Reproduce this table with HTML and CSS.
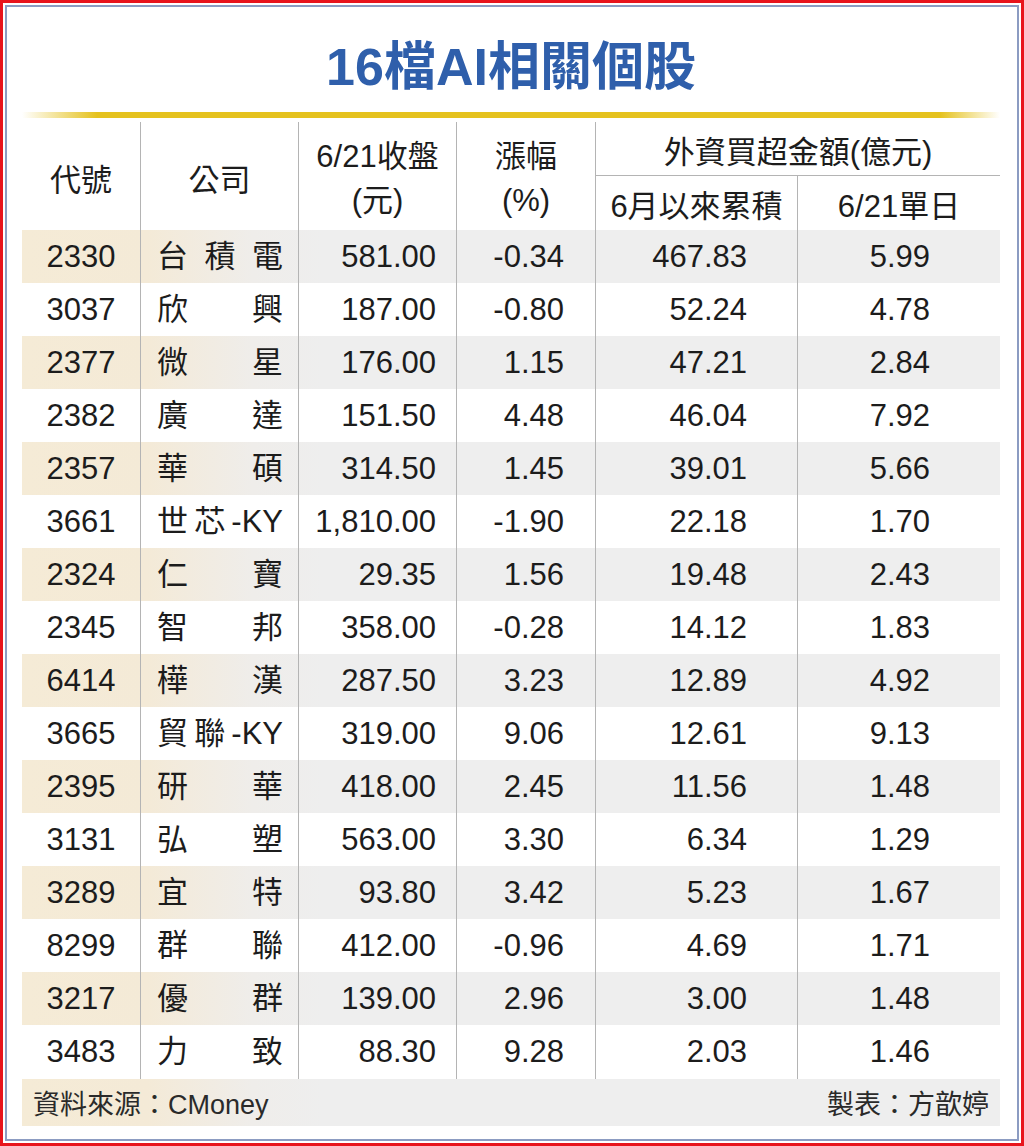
FILE: index.html
```html
<!DOCTYPE html>
<html lang="zh-Hant">
<head>
<meta charset="utf-8">
<title>16檔AI相關個股</title>
<link rel="stylesheet" href="styles.css">
</head>
<body>
<div class="frame">
  <div class="inner">
    <h1 class="title">16檔AI相關個股</h1>
    <div class="rule"></div>
    <div class="table">
      <div class="head">
        <div class="h hc1">代號</div>
        <div class="h hc2">公司</div>
        <div class="h hc3 two"><span>6/21收盤</span><span>(元)</span></div>
        <div class="h hc4 two"><span>漲幅</span><span>(%)</span></div>
        <div class="h group">外資買超金額(億元)</div>
        <div class="h sub5">6月以來累積</div>
        <div class="h sub6">6/21單日</div>
      </div>
      <div class="row alt"><div class="code">2330</div><div class="name">台積電</div><div class="n3">581.00</div><div class="n4">-0.34</div><div class="n5">467.83</div><div class="n6">5.99</div></div>
      <div class="row"><div class="code">3037</div><div class="name">欣興</div><div class="n3">187.00</div><div class="n4">-0.80</div><div class="n5">52.24</div><div class="n6">4.78</div></div>
      <div class="row alt"><div class="code">2377</div><div class="name">微星</div><div class="n3">176.00</div><div class="n4">1.15</div><div class="n5">47.21</div><div class="n6">2.84</div></div>
      <div class="row"><div class="code">2382</div><div class="name">廣達</div><div class="n3">151.50</div><div class="n4">4.48</div><div class="n5">46.04</div><div class="n6">7.92</div></div>
      <div class="row alt"><div class="code">2357</div><div class="name">華碩</div><div class="n3">314.50</div><div class="n4">1.45</div><div class="n5">39.01</div><div class="n6">5.66</div></div>
      <div class="row"><div class="code">3661</div><div class="name">世芯-KY</div><div class="n3">1,810.00</div><div class="n4">-1.90</div><div class="n5">22.18</div><div class="n6">1.70</div></div>
      <div class="row alt"><div class="code">2324</div><div class="name">仁寶</div><div class="n3">29.35</div><div class="n4">1.56</div><div class="n5">19.48</div><div class="n6">2.43</div></div>
      <div class="row"><div class="code">2345</div><div class="name">智邦</div><div class="n3">358.00</div><div class="n4">-0.28</div><div class="n5">14.12</div><div class="n6">1.83</div></div>
      <div class="row alt"><div class="code">6414</div><div class="name">樺漢</div><div class="n3">287.50</div><div class="n4">3.23</div><div class="n5">12.89</div><div class="n6">4.92</div></div>
      <div class="row"><div class="code">3665</div><div class="name">貿聯-KY</div><div class="n3">319.00</div><div class="n4">9.06</div><div class="n5">12.61</div><div class="n6">9.13</div></div>
      <div class="row alt"><div class="code">2395</div><div class="name">研華</div><div class="n3">418.00</div><div class="n4">2.45</div><div class="n5">11.56</div><div class="n6">1.48</div></div>
      <div class="row"><div class="code">3131</div><div class="name">弘塑</div><div class="n3">563.00</div><div class="n4">3.30</div><div class="n5">6.34</div><div class="n6">1.29</div></div>
      <div class="row alt"><div class="code">3289</div><div class="name">宜特</div><div class="n3">93.80</div><div class="n4">3.42</div><div class="n5">5.23</div><div class="n6">1.67</div></div>
      <div class="row"><div class="code">8299</div><div class="name">群聯</div><div class="n3">412.00</div><div class="n4">-0.96</div><div class="n5">4.69</div><div class="n6">1.71</div></div>
      <div class="row alt"><div class="code">3217</div><div class="name">優群</div><div class="n3">139.00</div><div class="n4">2.96</div><div class="n5">3.00</div><div class="n6">1.48</div></div>
      <div class="row"><div class="code">3483</div><div class="name">力致</div><div class="n3">88.30</div><div class="n4">9.28</div><div class="n5">2.03</div><div class="n6">1.46</div></div>
      <div class="foot"><span>資料來源：CMoney</span><span>製表：方歆婷</span></div>
    </div>
  </div>
</div>
</body>
</html>
```

FILE: styles.css
```css
html, body {
  margin: 0;
  padding: 0;
  background: #ffffff;
}

body {
  font-family: "Liberation Sans", "Noto Sans CJK TC", sans-serif;
  color: #1c1c1c;
}

.frame {
  width: 1024px;
  height: 1146px;
  box-sizing: border-box;
  border: 3px solid #e8141c;
  padding: 2px;
}

.inner {
  height: 100%;
  box-sizing: border-box;
  border: 2px solid #8c9cc2;
  padding: 0 17px 0 15px;
}

.title {
  margin: 0;
  height: 105px;
  box-sizing: border-box;
  padding-top: 6px;
  display: flex;
  align-items: center;
  justify-content: center;
  font-size: 52px;
  font-weight: bold;
  color: #2f5fab;
  letter-spacing: 0;
}

.rule {
  height: 6px;
  margin-bottom: 4px;
  background: linear-gradient(to right,
    rgba(229, 194, 30, 0) 0,
    #e5c21e 75px,
    #e5c21e calc(100% - 60px),
    rgba(229, 194, 30, 0) 100%);
}

.table {
  width: 978px;
}

.head {
  display: grid;
  grid-template-columns: 118px 158px 158px 139px 202px 203px;
  grid-template-rows: 54px 53.5px;
  font-size: 31px;
}

.h {
  display: flex;
  align-items: center;
  justify-content: center;
  text-align: center;
}

.hc1 { grid-column: 1; grid-row: 1 / 3; padding-top: 4px; }
.hc2 { grid-column: 2; grid-row: 1 / 3; padding-top: 4px; border-left: 1px solid #b4b4b4; }
.hc3 { grid-column: 3; grid-row: 1 / 3; border-left: 1px solid #b4b4b4; }
.hc4 { grid-column: 4; grid-row: 1 / 3; border-left: 1px solid #b4b4b4; }

.two {
  flex-direction: column;
  line-height: 44px;
  padding-top: 6px;
}

.group {
  grid-column: 5 / 7;
  grid-row: 1;
  border-left: 1px solid #b4b4b4;
  border-bottom: 1px solid #b4b4b4;
  padding-top: 2px;
}

.sub5 {
  grid-column: 5;
  grid-row: 2;
  border-left: 1px solid #b4b4b4;
  padding-top: 2px;
}

.sub6 {
  grid-column: 6;
  grid-row: 2;
  border-left: 1px solid #b4b4b4;
  padding-top: 2px;
}

.row {
  display: grid;
  grid-template-columns: 118px 158px 158px 139px 202px 203px;
  height: 53.07px;
  font-size: 31px;
  line-height: 53px;
}

.row > div {
  white-space: nowrap;
}

.row > div + div {
  border-left: 1px solid #b4b4b4;
}

.row.alt {
  background: linear-gradient(to right,
    #f5ebd6 0,
    #f4ead7 125px,
    #efedea 230px,
    #eeeeee 300px,
    #eeeeee 100%);
}

.code {
  text-align: center;
}

.name {
  padding: 0 15px 0 16px;
  text-align: justify;
  text-align-last: justify;
}

.n3 { text-align: right; padding-right: 20px; }
.n4 { text-align: right; padding-right: 31px; }
.n5 { text-align: right; padding-right: 50px; }
.n6 { text-align: right; padding-right: 70px; }

.foot {
  height: 47px;
  box-sizing: border-box;
  display: flex;
  align-items: center;
  justify-content: space-between;
  padding: 0 11px;
  font-size: 27px;
  color: #2a2a2a;
  background: linear-gradient(to right,
    #f5ebd6 0,
    #f4ead7 125px,
    #efedea 230px,
    #eeeeee 300px,
    #eeeeee 100%);
}
```
